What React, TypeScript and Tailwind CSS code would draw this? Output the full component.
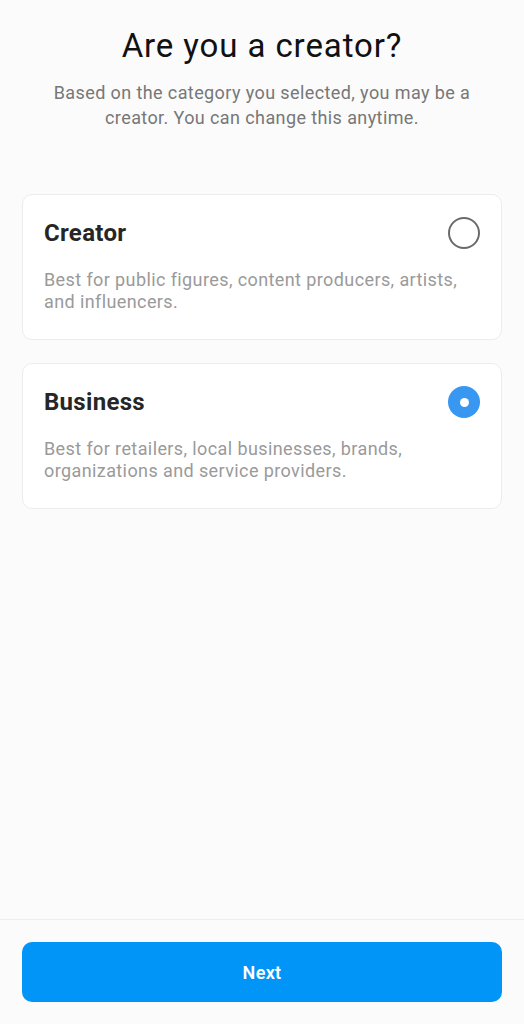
import { useState } from "react";

const OPTIONS = [
  { id: "creator", title: "Creator", desc: "Best for public figures, content producers, artists, and influencers." },
  { id: "business", title: "Business", desc: "Best for retailers, local businesses, brands, organizations and service providers." },
];

function Radio({ checked }: { checked: boolean }) {
  if (checked) {
    return (
      <span className="flex size-[32px] items-center justify-center rounded-full bg-[#3897f0]">
        <span className="size-[9px] rounded-full bg-white" />
      </span>
    );
  }
  return <span className="block size-[32px] rounded-full border-[2.5px] border-[#6b6b6b]" />;
}

export default function App() {
  const [selected, setSelected] = useState("business");

  return (
    <div
      className="flex h-[1024px] w-full flex-col bg-[#fbfbfb]"
      style={{ fontFamily: "Roboto, 'Liberation Sans', sans-serif" }}
    >
      <main className="flex-1 px-[22px]">
        <h1 className="pt-[26px] text-center text-[33px] leading-[40px] tracking-[0.9px] text-[#111]">
          Are you a creator?
        </h1>
        <p className="mx-auto mt-[14px] max-w-[430px] text-center text-[18px] leading-[25px] tracking-[0.4px] text-[#777]">
          Based on the category you selected, you may be a creator. You can change this anytime.
        </p>

        <div className="mt-[64px] flex flex-col gap-[23px]">
          {OPTIONS.map((o) => (
            <button
              key={o.id}
              onClick={() => setSelected(o.id)}
              className="rounded-[10px] border border-[#ececec] bg-white px-[21px] pb-[26px] pt-[22px] text-left"
            >
              <div className="flex h-[32px] items-center justify-between">
                <span className="text-[24px] font-bold tracking-[0.3px] text-[#262626]">{o.title}</span>
                <Radio checked={selected === o.id} />
              </div>
              <p className="mt-[20px] text-[18px] leading-[22px] tracking-[0.4px] text-[#9a9a9a]">{o.desc}</p>
            </button>
          ))}
        </div>
      </main>

      <footer className="border-t border-[#eeeeee] px-[22px] py-[22px]">
        <button className="h-[60px] w-full rounded-[10px] bg-[#0095f6] text-[18px] font-semibold tracking-[0.3px] text-white">
          Next
        </button>
      </footer>
    </div>
  );
}
